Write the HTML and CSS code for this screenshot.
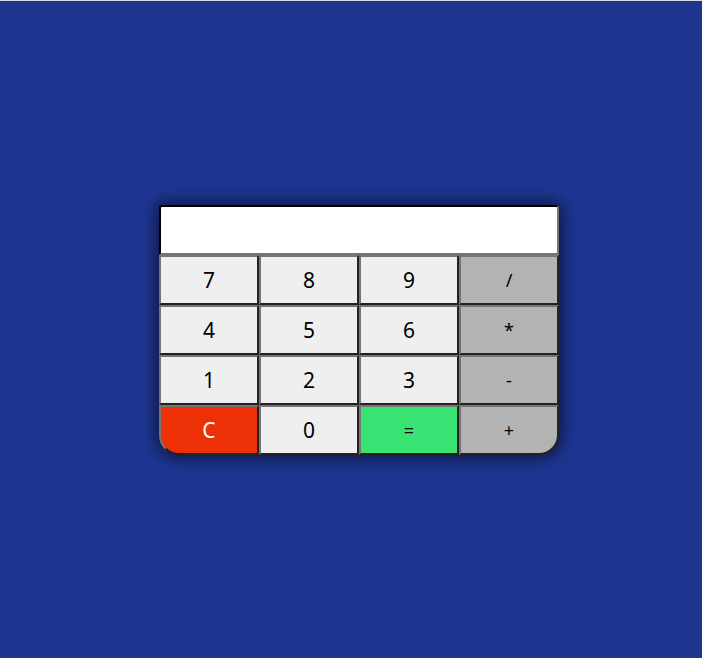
FILE: index.html
```html
<!DOCTYPE html>
<html lang="en">
<head>
    <meta charset="UTF-8">
    <meta name="viewport" content="width=device-width, initial-scale=1.0">
    <title>Calculator</title>
    <link rel="stylesheet" href="styles.css">
</head>
<body>
    <div class="page">
        <div class="calculator">
            <input type="text" class="display" id="display" readonly>
            <div class="keys">
                <button class="key">7</button>
                <button class="key">8</button>
                <button class="key">9</button>
                <button class="key operator">/</button>
                <button class="key">4</button>
                <button class="key">5</button>
                <button class="key">6</button>
                <button class="key operator">*</button>
                <button class="key">1</button>
                <button class="key">2</button>
                <button class="key">3</button>
                <button class="key operator">-</button>
                <button class="key clear">C</button>
                <button class="key">0</button>
                <button class="key equals">=</button>
                <button class="key operator plus">+</button>
            </div>
        </div>
    </div>
</body>
</html>
```

FILE: styles.css
```css
* {
    margin: 0;
    padding: 0;
    box-sizing: border-box;
}

body {
    background-color: #1e3592;
    border-top: 1px solid #dcdcdc;
    font-family: "Noto Sans", "DejaVu Sans", sans-serif;
}

.page {
    min-height: 657px;
    display: flex;
    align-items: center;
    justify-content: center;
    padding-left: 16px;
}

.calculator {
    width: 400px;
    border-radius: 4px 4px 20px 20px;
    box-shadow: 0 0 16px 3px rgba(0, 0, 0, 0.6);
}

.display {
    display: block;
    width: 100%;
    height: 50px;
    border: 2px inset #767676;
    border-top-color: #222;
    border-left-color: #222;
    border-radius: 3px 3px 0 0;
    background: #ffffff;
    font-size: 24px;
    padding: 0 10px;
    text-align: right;
}

.keys {
    display: grid;
    grid-template-columns: repeat(4, 100px);
}

.key {
    height: 50px;
    border: 2px solid #222;
    border-top-color: #767676;
    border-left-color: #767676;
    background-color: #efefef;
    color: #000;
    font-family: "Noto Sans", "DejaVu Sans", sans-serif;
    font-size: 21px;
    cursor: pointer;
}

.operator {
    background-color: #b3b3b3;
    font-size: 18px;
}

.clear {
    background-color: #ed3005;
    color: #ffffff;
    border-bottom-left-radius: 20px;
}

.equals {
    background-color: #3be375;
    font-size: 18px;
}

.plus {
    border-bottom-right-radius: 20px;
}
```
